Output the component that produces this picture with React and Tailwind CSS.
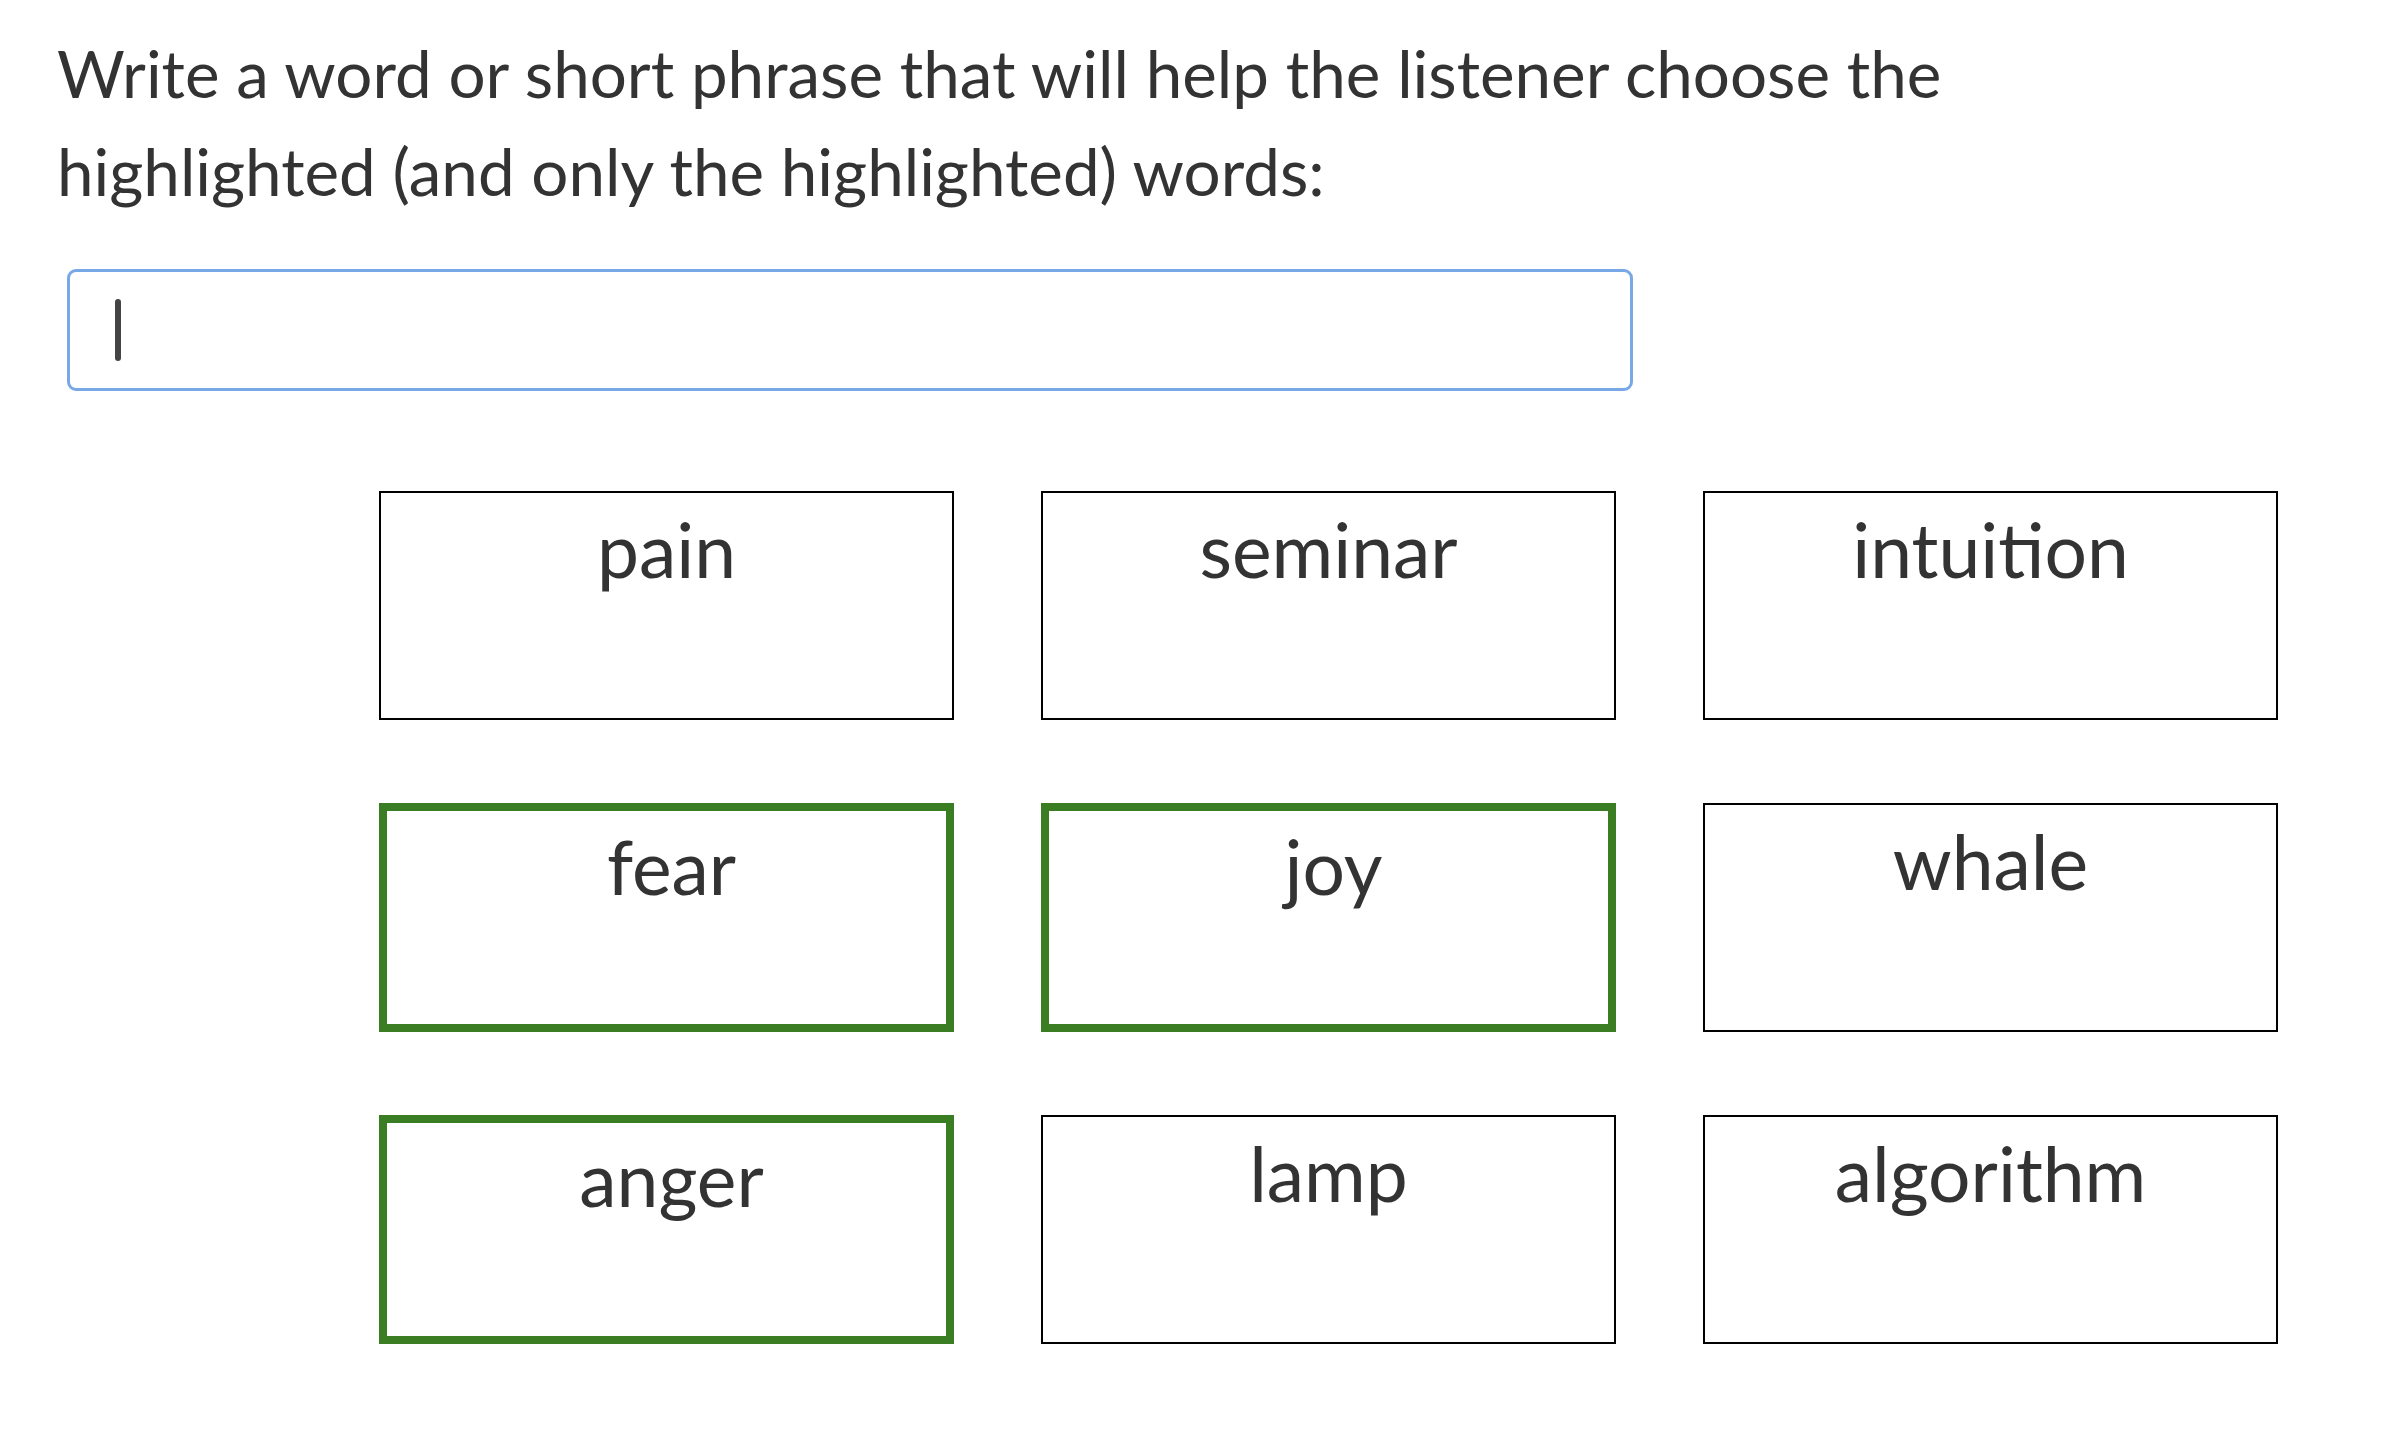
export default function App() {
  const words = [
    { w: "pain", g: false },
    { w: "seminar", g: false },
    { w: "intuition", g: false },
    { w: "fear", g: true },
    { w: "joy", g: true },
    { w: "whale", g: false },
    { w: "anger", g: true },
    { w: "lamp", g: false },
    { w: "algorithm", g: false },
  ];
  return (
    <div
      className="min-h-screen w-full bg-white text-[#333333]"
      style={{ fontFamily: "Lato, 'Noto Sans', sans-serif" }}
    >
      <div className="pt-[24px] pl-[57px]">
        <p className="text-[65.5px] leading-[98px] w-[2000px]">
          Write a word or short phrase that will help the listener choose the
          <br />
          highlighted (and only the highlighted) words:
        </p>
        <div className="ml-[10px] mt-[49px] w-[1566px] h-[122px] rounded-[9px] border-[3px] border-[#78a9e6] flex items-center pl-[45px]">
          <div className="w-[6px] h-[62px] rounded-full bg-[#444444]" />
        </div>
      </div>
      <div className="mt-[100px] ml-[379px] grid grid-cols-[575px_575px_575px] gap-x-[87px] gap-y-[83px]">
        {words.map((x) => (
          <div
            key={x.w}
            className={
              x.g
                ? "h-[229px] border-[8px] border-[#3a7d23] flex justify-center pt-[10px] pl-[10px]"
                : "h-[229px] border-2 border-black flex justify-center pt-[11px]"
            }
          >
            <span className="text-[75px] leading-[90px]">{x.w}</span>
          </div>
        ))}
      </div>
    </div>
  );
}
